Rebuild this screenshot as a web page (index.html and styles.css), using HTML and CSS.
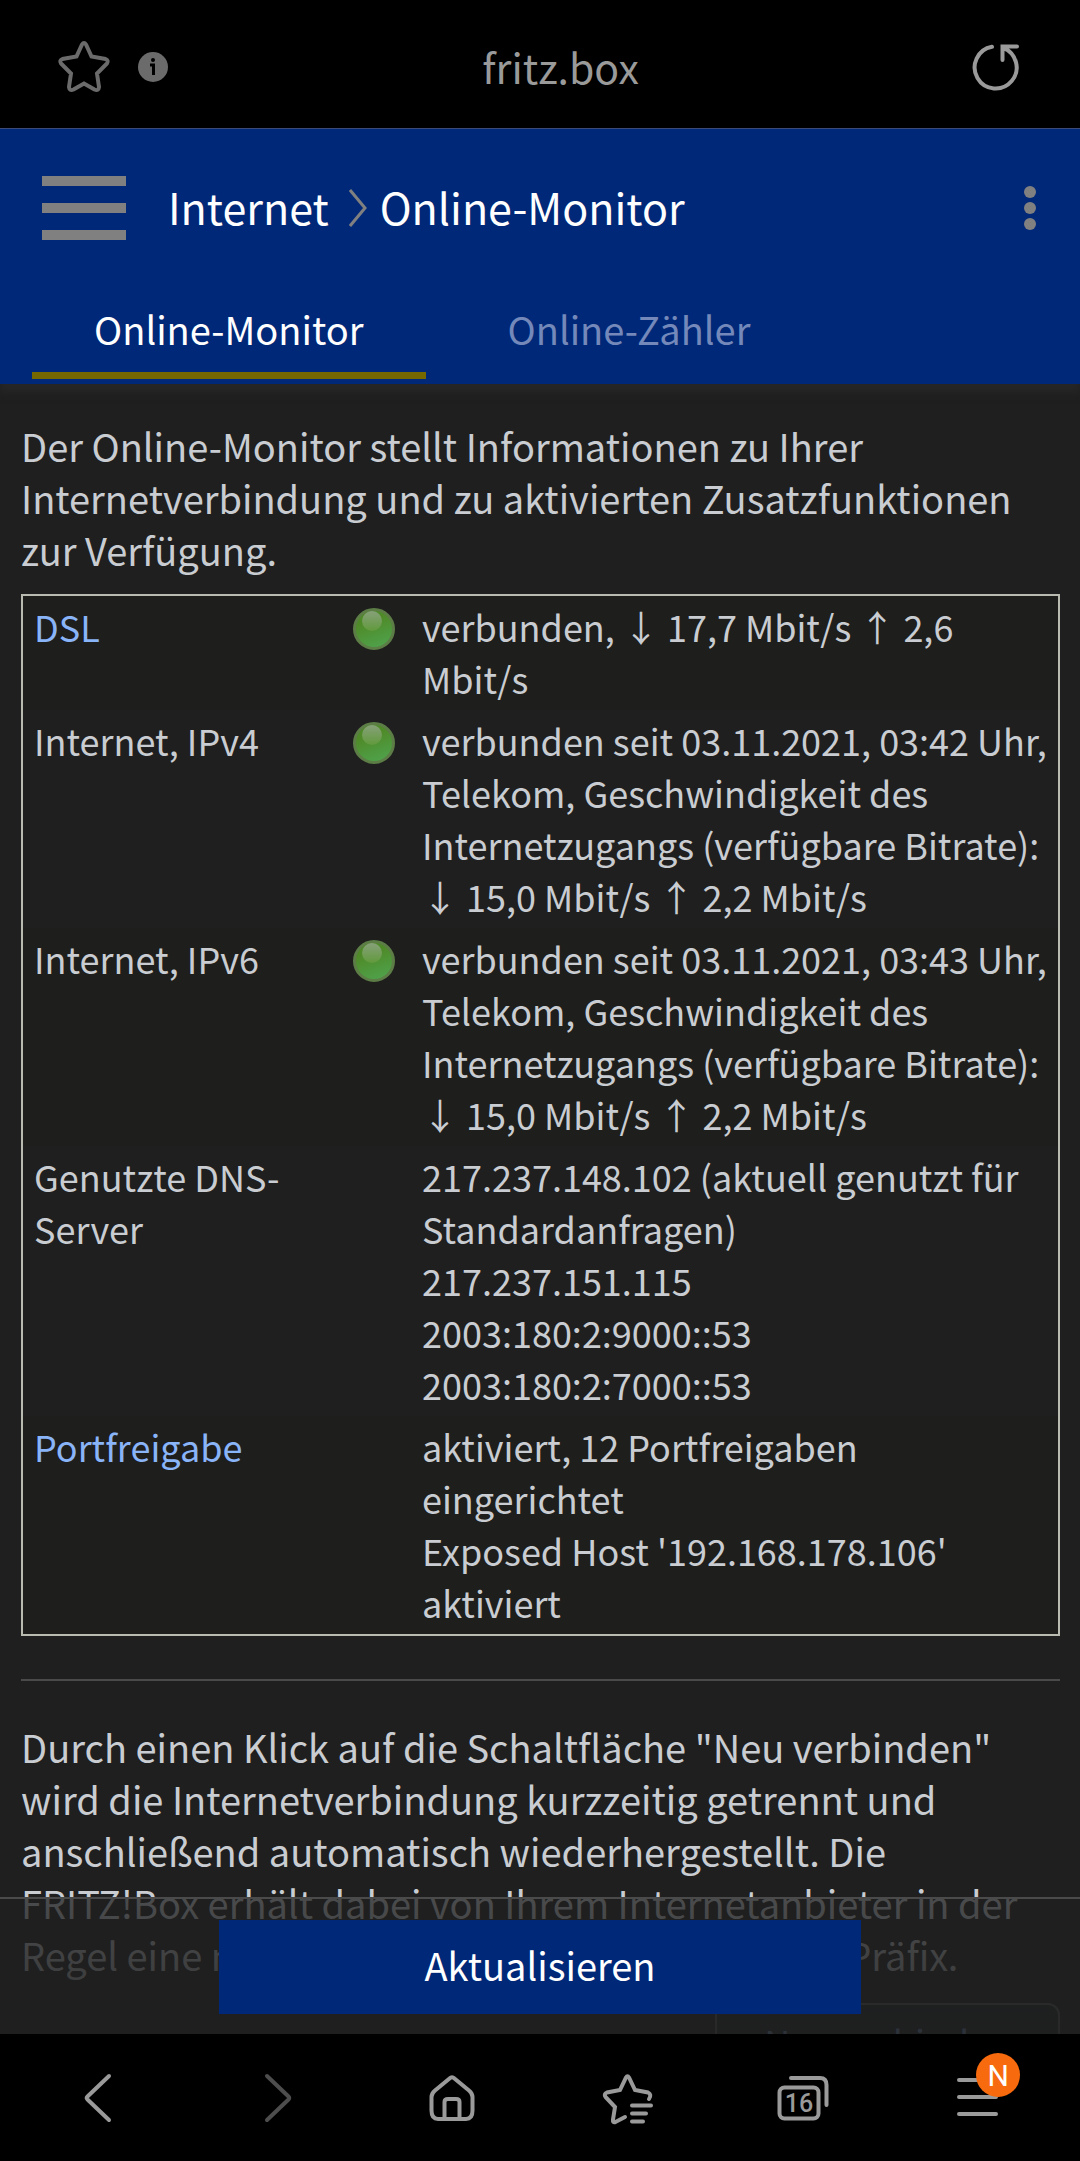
FILE: index.html
```html
<!DOCTYPE html>
<html lang="de">
<head>
    <meta charset="UTF-8">
    <meta name="viewport" content="width=device-width, initial-scale=1.0">
    <title>FRITZ!Box - Online-Monitor</title>
    <link rel="stylesheet" href="styles.css">
</head>
<body>

    <div class="adressleiste">
        <div class="links">
            <button type="button" aria-label="Lesezeichen">
                <svg class="stern" width="56" height="56" viewBox="0 0 56 56">
                    <path d="M26 5.500 Q28 2.500 30 5.500 L35.500 17.500 L49.500 20 Q53 21.500 51 24.500 L41 34.500 L43 48 Q42.500 52.500 38.500 50.500 L28 44.500 L17.500 50.500 Q13.500 52.500 13 48 L15 34.500 L5 24.500 Q3 21.500 6.500 20 L20.500 17.500 Z"/>
                </svg>
            </button>
            <button type="button" aria-label="Seiteninfo">
                <svg width="30" height="30" viewBox="0 0 30 30">
                    <circle cx="15" cy="15" r="15" fill="#6b6b6b"/>
                    <circle cx="15" cy="8" r="2" fill="#000"/>
                    <path d="M12 13h3.500v10" fill="none" stroke="#000" stroke-width="3"/>
                </svg>
            </button>
        </div>
        <span class="adresse">fritz.box</span>
        <button type="button" class="rechts" aria-label="Neu laden">
            <svg width="50" height="50" viewBox="0 0 50 50">
                <path d="M21 4.800A21 21 0 1 0 32 5.800M46 4.500H31.500V18"/>
            </svg>
        </button>
    </div>

    <header class="kopf">
        <div class="titelzeile">
            <button type="button" class="menue" aria-label="Menü"><i></i><i></i><i></i></button>
            <h1>
                <span>Internet</span>
                <svg width="18" height="38" viewBox="0 0 18 38"><path d="M1 1L16 19L1 37"/></svg>
                <span>Online-Monitor</span>
            </h1>
            <button type="button" class="mehr" aria-label="Mehr"><i></i><i></i><i></i></button>
        </div>
        <nav class="reiter">
            <a href="#" class="aktiv">Online-Monitor</a>
            <a href="#">Online-Zähler</a>
        </nav>
    </header>

    <main class="seite">
        <div class="inhalt">
            <p>Der Online-Monitor stellt Informationen zu Ihrer Internetverbindung und zu aktivierten Zusatzfunktionen zur Verfügung.</p>

            <table>
                <tbody>
                    <tr>
                        <th><a href="#">DSL</a></th>
                        <td class="status"><span class="led"></span></td>
                        <td>verbunden, ↓&nbsp;17,7 Mbit/s ↑&nbsp;2,6 Mbit/s</td>
                    </tr>
                    <tr>
                        <th>Internet, IPv4</th>
                        <td class="status"><span class="led"></span></td>
                        <td>verbunden seit 03.11.2021, 03:42 Uhr, Telekom, Geschwindigkeit des Internetzugangs (verfügbare Bitrate): ↓&nbsp;15,0 Mbit/s ↑&nbsp;2,2 Mbit/s</td>
                    </tr>
                    <tr>
                        <th>Internet, IPv6</th>
                        <td class="status"><span class="led"></span></td>
                        <td>verbunden seit 03.11.2021, 03:43 Uhr, Telekom, Geschwindigkeit des Internetzugangs (verfügbare Bitrate): ↓&nbsp;15,0 Mbit/s ↑&nbsp;2,2 Mbit/s</td>
                    </tr>
                    <tr>
                        <th>Genutzte DNS-Server</th>
                        <td class="status"></td>
                        <td>217.237.148.102 (aktuell genutzt für Standardanfragen)<br>217.237.151.115<br>2003:180:2:9000::53<br>2003:180:2:7000::53</td>
                    </tr>
                    <tr>
                        <th><a href="#">Portfreigabe</a></th>
                        <td class="status"></td>
                        <td>aktiviert, 12 Portfreigaben eingerichtet<br>Exposed Host '192.168.178.106' aktiviert</td>
                    </tr>
                </tbody>
            </table>

            <hr>

            <p>Durch einen Klick auf die Schaltfläche "Neu verbinden" wird die Internetverbindung kurzzeitig getrennt und anschließend automatisch wiederhergestellt. Die FRITZ!Box erhält dabei von Ihrem Internetanbieter in der Regel eine neue IP-Adresse und ein neues IPv6-Präfix.</p>

            <button type="button" class="verbinden">Neu verbinden</button>
        </div>

        <!-- liegt halbtransparent über dem Inhalt -->
        <div class="fussleiste">
            <button type="button">Aktualisieren</button>
        </div>
    </main>

    <nav class="browserleiste">
        <button type="button" aria-label="Zurück">
            <svg width="64" height="64" viewBox="0 0 64 64"><path d="M39 10L17.500 30.500Q16 32 17.500 33.500L39 54"/></svg>
        </button>
        <button type="button" class="inaktiv" aria-label="Vorwärts">
            <svg width="64" height="64" viewBox="0 0 64 64"><path d="M22 10L43.500 30.500Q45 32 43.500 33.500L22 54"/></svg>
        </button>
        <button type="button" aria-label="Startseite">
            <svg width="64" height="64" viewBox="0 0 64 64">
                <path d="M29.500 12.500Q32 10 34.500 12.500L49 24.500Q52.500 27.500 52.500 31V44.500Q52.500 53 46 53H18Q11.500 53 11.500 44.500V31Q11.500 27.500 15 24.500Z"/>
                <path d="M24.500 53V36Q24.500 33 28 33H36Q39.500 33 39.500 36V53"/>
            </svg>
        </button>
        <button type="button" aria-label="Lesezeichenliste">
            <svg width="64" height="64" viewBox="0 0 64 64">
                <path d="M29 51L19.500 56Q16.500 57 17 53.500L19 41L9.500 31Q7.500 28 11 26.500L24 24L30 11.500Q31.500 9 33 11.500L39 24L52 26.500Q56 28.500 53 33"/>
                <path d="M36 39.500H55M36 47.500H50M36 55.500H47"/>
            </svg>
        </button>
        <button type="button" aria-label="Tabs">
            <svg width="64" height="64" viewBox="0 0 64 64">
                <rect x="8.500" y="21.500" width="39" height="31" rx="5"/>
                <path d="M20 12H49Q55.500 12 55.500 19V39"/>
                <text x="28" y="46" text-anchor="middle">16</text>
            </svg>
        </button>
        <button type="button" aria-label="Menü">
            <svg width="64" height="64" viewBox="0 0 64 64"><path d="M13 14H50M13 31H50M13 48H50"/></svg>
            <span class="hinweis">N</span>
        </button>
    </nav>

</body>
</html>
```
FILE: styles.css
```css
* {
    box-sizing: border-box;
}

body {
    margin: 0;
    height: 100vh;
    display: flex;
    flex-direction: column;
    background-color: #1f1f1f;
    color: #c9cdd2;
    font-family: "Noto Sans CJK SC", "Open Sans", sans-serif;
    font-size: 38px;
    line-height: 52px;
}

button {
    margin: 0;
    padding: 0;
    border: none;
    background: none;
    color: inherit;
    font: inherit;
}

a {
    color: #8ab4f8;
    text-decoration: none;
}

svg {
    display: block;
}

/* Adressleiste */
.adressleiste {
    flex: none;
    display: flex;
    align-items: center;
    gap: 20px;
    height: 129px;
    padding: 5px 59px 0 56px;
    background-color: #000;
    border-bottom: 1px solid #3d4c7c;
    color: #9a9a9a;
}

.links {
    flex: 1 0 44px;
    display: flex;
    align-items: center;
    gap: 26px;
}

.stern {
    fill: none;
    stroke: #6b6b6b;
    stroke-width: 4;
}

.adresse {
    padding-bottom: 2px;
    font-size: 41px;
}

.rechts {
    flex: 1 0 0;
    display: flex;
    justify-content: flex-end;
    fill: none;
    stroke: #9a9a9a;
    stroke-width: 4;
    stroke-linecap: round;
}

/* Kopfbereich */
.kopf {
    flex: none;
    background-color: #002878;
    color: #fff;
    position: relative;
    box-shadow: 0 8px 8px #272727;
}

.titelzeile {
    display: flex;
    align-items: center;
    height: 158px;
    padding: 0 44px 0 42px;
}

.menue {
    width: 84px;
    display: grid;
    gap: 17px;
}

.menue i {
    height: 10px;
    background-color: #808080;
}

h1 {
    flex: 1;
    display: flex;
    align-items: center;
    gap: 13px;
    margin: 0 0 0 42px;
    padding-bottom: 4px;
    font-size: 43px;
    font-weight: 400;
}

h1 svg {
    margin: 4px 0 0 7px;
    fill: none;
    stroke: #808080;
    stroke-width: 3;
}

.mehr {
    display: grid;
    gap: 4px;
}

.mehr i {
    width: 12px;
    height: 12px;
    border-radius: 50%;
    background-color: #808080;
}

.reiter {
    display: flex;
    gap: 20px;
    padding: 0 32px 5px;
}

.reiter a {
    padding: 16px 62px 17px;
    border-bottom: 7px solid transparent;
    color: #7489ba;
}

.reiter .aktiv {
    color: #fff;
    border-color: #756800;
}

/* Inhalt */
.seite {
    flex: 1;
    min-height: 0;
    position: relative;
    overflow: hidden;
}

.inhalt {
    display: flow-root;
    padding: 36px 20px 0 21px;
}

p {
    margin: 0;
}

table {
    width: 100%;
    margin-top: 18px;
    border: 2px solid #b9bab0;
    border-spacing: 0;
    table-layout: fixed;
    font-size: 36px;
}

th, td {
    padding: 4px 11px 6px;
    text-align: left;
    vertical-align: top;
    font-weight: 400;
}

th {
    width: 319px;
}

th:first-child {
    padding-right: 60px;
}

.status {
    width: 69px;
}

tr:nth-child(odd) {
    background-color: #1e1e1c;
}

.led {
    display: block;
    width: 42px;
    height: 42px;
    margin-top: 8px;
    border: 3px solid #5c7d45;
    border-radius: 50%;
    background: linear-gradient(160deg, #4f8a28 30%, #4fa550);
}

.led::before {
    content: "";
    display: block;
    width: 20px;
    height: 20px;
    margin-left: 6px;
    border-radius: 50%;
    background: linear-gradient(#87a07a, #619a3c);
}

hr {
    margin: 43px 0 40px;
    border: none;
    border-top: 2px solid #4a4a4a;
}

.verbinden {
    display: block;
    margin: 22px 0 0 auto;
    padding: 10px 47px;
    border: 2px solid #66696c;
    border-radius: 12px;
    background-color: #1c2126;
    color: #8ab4f8;
    font-size: 36px;
}

.fussleiste {
    position: absolute;
    left: 0;
    right: 0;
    bottom: 0;
    display: flex;
    justify-content: center;
    padding: 21px 0 20px;
    border-top: 2px solid #4a4a4a;
    background: linear-gradient(rgba(31, 31, 31, 0.75), rgba(31, 31, 31, 0.88));
}

.fussleiste button {
    width: 642px;
    padding: 19px 0 23px;
    background-color: #002878;
    color: #fff;
}

/* Untere Browserleiste */
.browserleiste {
    flex: none;
    display: flex;
    height: 127px;
    padding: 0 14px;
    background-color: #000;
    color: #9a9a9a;
}

.browserleiste button {
    flex: 1;
    display: flex;
    align-items: center;
    justify-content: center;
    position: relative;
}

.browserleiste svg {
    fill: none;
    stroke: #9a9a9a;
    stroke-width: 4;
    stroke-linecap: round;
}

.browserleiste .inaktiv svg {
    stroke: #4d4d4d;
}

.browserleiste text {
    fill: #9a9a9a;
    stroke: none;
    font-family: Roboto, sans-serif;
    font-size: 25px;
    font-weight: 500;
}

.hinweis {
    position: absolute;
    top: 19px;
    left: calc(50% - 2px);
    width: 44px;
    height: 44px;
    border-radius: 50%;
    background-color: #f76b0e;
    color: #fff;
    font-family: Roboto, sans-serif;
    font-size: 30px;
    line-height: 46px;
    text-align: center;
}
```
